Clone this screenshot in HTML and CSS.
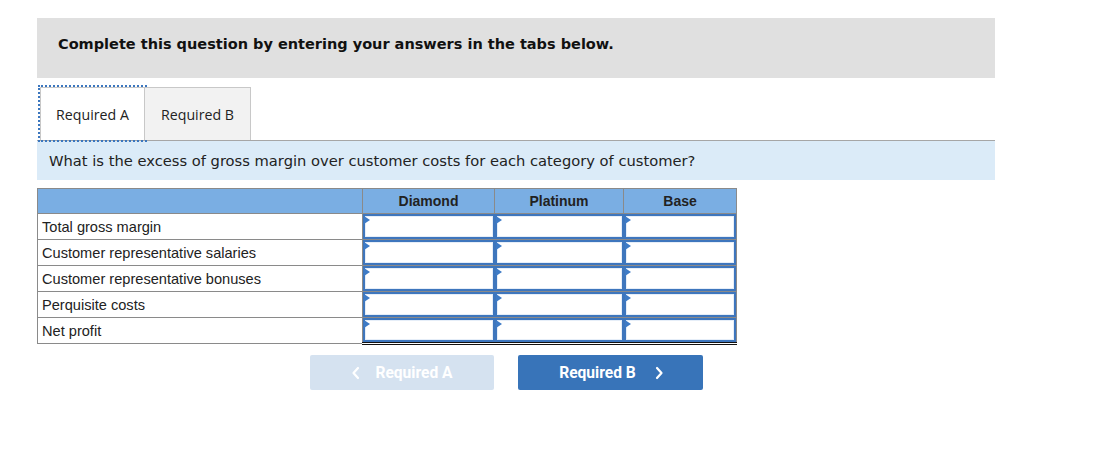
FILE: index.html
```html
<!DOCTYPE html>
<html>
<head>
<meta charset="utf-8">
<link rel="stylesheet" href="styles.css">
</head>
<body>
<div class="wrap">
  <div class="instructions">Complete this question by entering your answers in the tabs below.</div>
  <div class="tabs">
    <div class="tab tab-active">Required A</div>
    <div class="tab tab-inactive">Required B</div>
  </div>
  <div class="question">What is the excess of gross margin over customer costs for each category of customer?</div>
  <table class="grid">
    <thead>
      <tr>
        <th class="label-head"></th>
        <th class="col-d">Diamond</th>
        <th class="col-p">Platinum</th>
        <th class="col-b">Base</th>
      </tr>
    </thead>
    <tbody>
      <tr>
        <td class="label">Total gross margin</td>
        <td class="val"><div class="inp"><span class="tri"></span></div></td>
        <td class="val"><div class="inp"><span class="tri"></span></div></td>
        <td class="val"><div class="inp"><span class="tri"></span></div></td>
      </tr>
      <tr>
        <td class="label">Customer representative salaries</td>
        <td class="val"><div class="inp"><span class="tri"></span></div></td>
        <td class="val"><div class="inp"><span class="tri"></span></div></td>
        <td class="val"><div class="inp"><span class="tri"></span></div></td>
      </tr>
      <tr>
        <td class="label">Customer representative bonuses</td>
        <td class="val"><div class="inp"><span class="tri"></span></div></td>
        <td class="val"><div class="inp"><span class="tri"></span></div></td>
        <td class="val"><div class="inp"><span class="tri"></span></div></td>
      </tr>
      <tr>
        <td class="label">Perquisite costs</td>
        <td class="val"><div class="inp"><span class="tri"></span></div></td>
        <td class="val"><div class="inp"><span class="tri"></span></div></td>
        <td class="val"><div class="inp"><span class="tri"></span></div></td>
      </tr>
      <tr class="total">
        <td class="label">Net profit</td>
        <td class="val"><div class="inp"><span class="tri"></span></div></td>
        <td class="val"><div class="inp"><span class="tri"></span></div></td>
        <td class="val"><div class="inp"><span class="tri"></span></div></td>
      </tr>
    </tbody>
  </table>
  <div class="nav">
    <button class="btn btn-prev"><svg class="chev" width="10" height="14" viewBox="0 0 10 14"><polyline points="7,2 2.5,7 7,12" fill="none" stroke="#ffffff" stroke-width="2.2" stroke-linecap="round" stroke-linejoin="round"/></svg><span>Required A</span></button>
    <button class="btn btn-next"><span>Required B</span><svg class="chev" width="10" height="14" viewBox="0 0 10 14"><polyline points="3,2 7.5,7 3,12" fill="none" stroke="#ffffff" stroke-width="2.2" stroke-linecap="round" stroke-linejoin="round"/></svg></button>
  </div>
</div>
</body>
</html>
```

FILE: styles.css
```css
html, body {
  margin: 0;
  padding: 0;
  background: #ffffff;
}

.wrap {
  padding: 18px 0 0 37px;
  width: 958px;
}

.instructions {
  height: 60px;
  box-sizing: border-box;
  background: #e0e0e0;
  padding: 16px 0 0 21px;
  font-family: "DejaVu Sans", Verdana, sans-serif;
  font-weight: bold;
  font-size: 14.5px;
  line-height: 20px;
  color: #111;
}

.tabs {
  display: flex;
  margin-top: 9px;
  padding-left: 3px;
  border-bottom: 1px solid #a6a6a6;
  height: 53px;
}

.tab {
  box-sizing: border-box;
  height: 53px;
  display: flex;
  align-items: center;
  justify-content: center;
  font-family: "Open Sans", "Noto Sans", sans-serif;
  font-size: 14.2px;
  color: #222;
}

.tab-active {
  width: 105px;
  background: #ffffff;
  border: 1px solid #c8c8c8;
  border-bottom: none;
  outline: 2px dotted #3b76be;
  outline-offset: 0;
}

.tab-inactive {
  width: 106px;
  background: #f2f2f2;
  border: 1px solid #c8c8c8;
  border-left: none;
  border-bottom: none;
}

.question {
  height: 39px;
  box-sizing: border-box;
  background: #dbebf8;
  padding: 10px 0 0 12px;
  font-family: "DejaVu Sans", Verdana, sans-serif;
  font-size: 14.7px;
  line-height: 20px;
  color: #222;
}

.grid {
  margin-top: 8px;
  border-collapse: collapse;
  font-family: "Liberation Sans", Arial, sans-serif;
  font-size: 14.6px;
  color: #222;
}

.grid th {
  height: 24px;
  padding: 0;
  background: #7aaee3;
  border: 1px solid #8a8a8a;
  font-weight: bold;
  font-size: 14px;
  text-align: center;
  vertical-align: middle;
  color: #222;
}

.label-head { width: 324px; }
.col-d { width: 131px; }
.col-p { width: 128px; }
.col-b { width: 112px; }

.grid td.label {
  height: 25px;
  padding: 0 0 0 4px;
  border: 1px solid #8a8a8a;
  vertical-align: middle;
  white-space: nowrap;
}

.grid td.val {
  padding: 0;
  border: 1px solid #8a8a8a;
  border-left: none;
  border-right: none;
  vertical-align: top;
}

.grid td.val:last-child {
  border-right: 1px solid #8a8a8a;
}

.inp {
  position: relative;
  box-sizing: border-box;
  height: 25px;
  margin: 0;
  border: 2px solid #3e76bd;
  background: #ffffff;
  box-shadow: inset 0 0 0 1px #e6eef8;
}

.tri {
  position: absolute;
  left: -1px;
  top: 0;
  width: 0;
  height: 0;
  border-top: 4px solid transparent;
  border-bottom: 4px solid transparent;
  border-left: 6px solid #3e7bc6;
}

.total td.val {
  border-top: 1px solid #111;
  border-bottom: 3px double #111;
}

.total td.label {
  height: 24px;
}

.total td.val .inp {
  height: 24px;
}

.nav {
  display: flex;
  gap: 24px;
  padding-left: 273px;
  margin-top: 10px;
}

.btn {
  width: 184px;
  height: 35px;
  border: none;
  border-radius: 2px;
  display: flex;
  align-items: center;
  justify-content: center;
  gap: 14px;
  font-family: Roboto, "Liberation Sans", sans-serif;
  font-weight: bold;
  font-size: 15.6px;
  color: #ffffff;
  padding: 0;
}

.btn-prev {
  background: #d5e2f0;
}

.btn-next {
  width: 185px;
  background: #3874b9;
  gap: 18px;
  padding-left: 2px;
}

.chev {
  display: block;
}
```
